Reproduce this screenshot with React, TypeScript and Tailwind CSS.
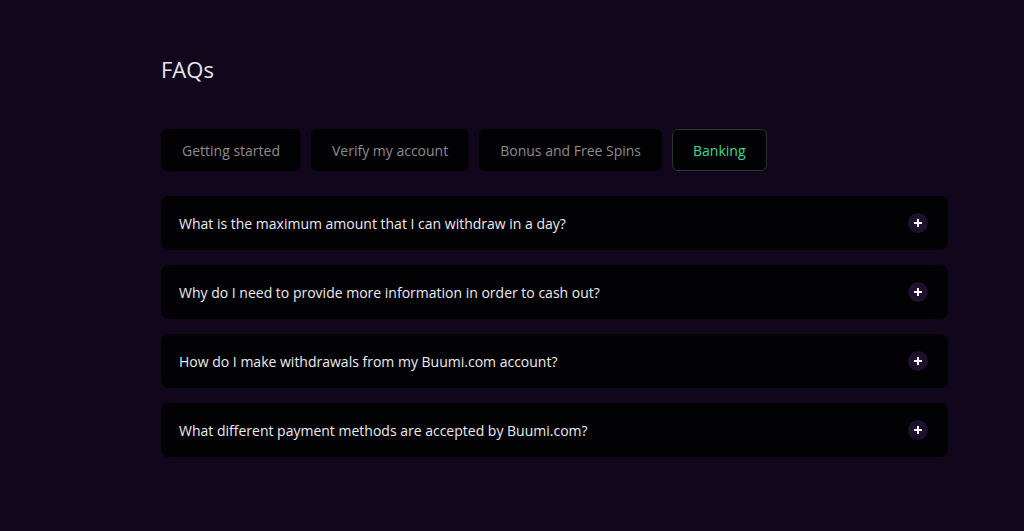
import React from "react";

const tabs = ["Getting started", "Verify my account", "Bonus and Free Spins", "Banking"];
const qs = [
  "What is the maximum amount that I can withdraw in a day?",
  "Why do I need to provide more information in order to cash out?",
  "How do I make withdrawals from my Buumi.com account?",
  "What different payment methods are accepted by Buumi.com?",
];

export default function App() {
  return (
    <div className="min-h-[531px] w-full bg-[#12061d] pl-[161px] pr-[76px] pt-[55px]" style={{ fontFamily: '"Open Sans", "Noto Sans", sans-serif' }}>
      <h1 className="text-[22px] leading-[28px] text-[#e6e6ea] font-normal">FAQs</h1>
      <div className="mt-[46px] flex gap-[10px]">
        {tabs.map((t, i) => (
          <div
            key={t}
            className={
              "h-[42px] rounded-[6px] flex items-center justify-center px-[20px] text-[14px] bg-[#020104] border " +
              (i === 3 ? "border-[#1f3a31] text-[#3fd98c] px-[20px]" : "border-transparent text-[#8c8c8c]")
            }
          >
            {t}
          </div>
        ))}
      </div>
      <div className="mt-[25px] flex flex-col gap-[15px]">
        {qs.map((q) => (
          <div key={q} className="h-[54px] rounded-[8px] bg-[#020104] flex items-center justify-between pl-[18px] pr-[20px]">
            <span className="text-[14px] text-[#ececef]">{q}</span>
            <span className="w-[20px] h-[20px] rounded-full bg-[#1f1030] flex items-center justify-center">
              <svg width="10" height="10" viewBox="0 0 10 10">
                <path d="M5 1v8M1 5h8" stroke="#ffffff" strokeWidth="2" />
              </svg>
            </span>
          </div>
        ))}
      </div>
    </div>
  );
}
